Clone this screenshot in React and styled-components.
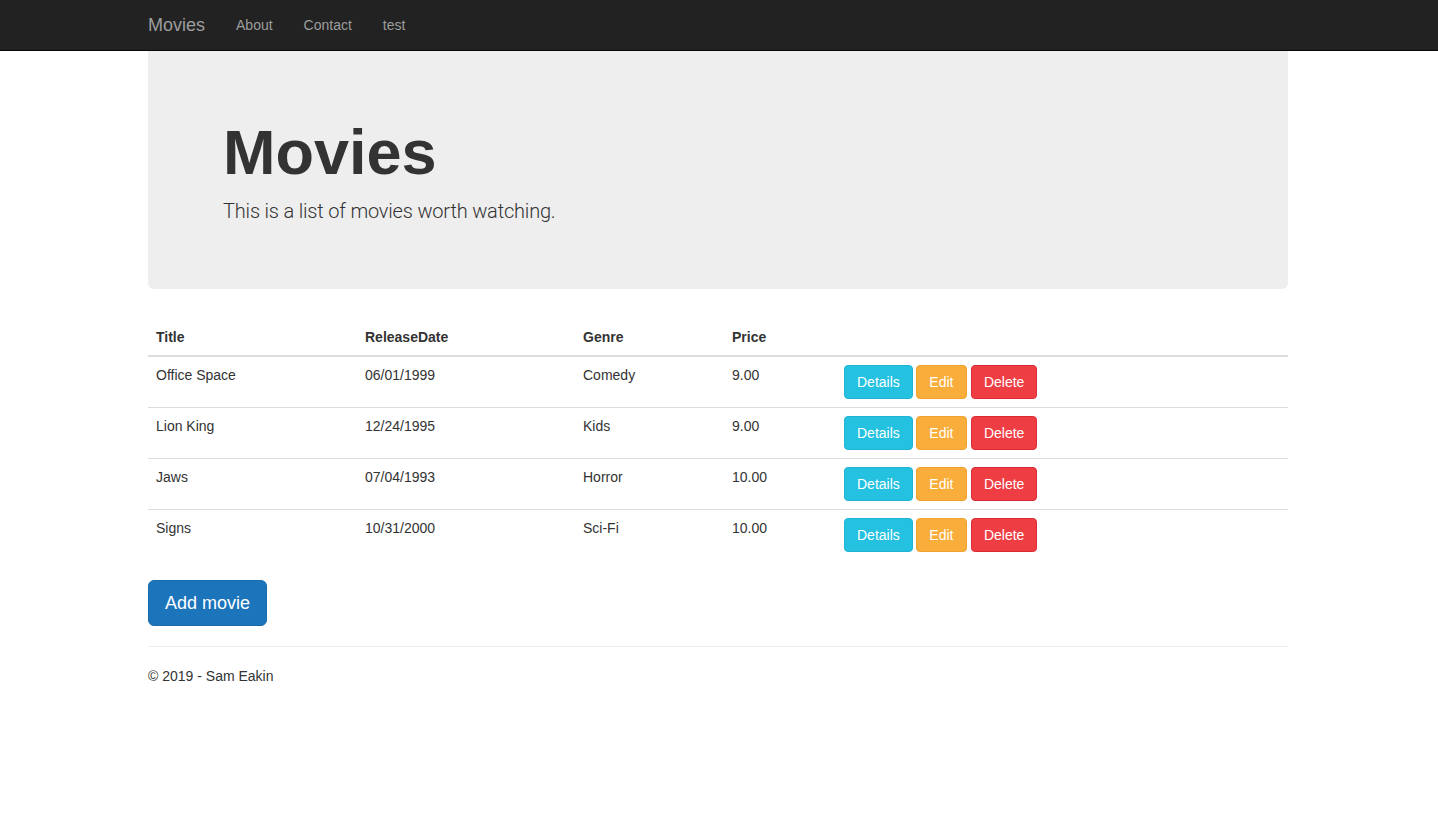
import React from 'react'
import styled, { createGlobalStyle } from 'styled-components'

const GlobalStyle = createGlobalStyle`
  html, body { margin: 0; padding: 0; }
  *, *::before, *::after { box-sizing: border-box; }
  body {
    font-family: "Liberation Sans", Arial, sans-serif;
    font-size: 14px;
    line-height: 1.42857;
    color: #333;
    background: #fff;
  }
`

const movies = [
  { title: 'Office Space', date: '06/01/1999', genre: 'Comedy', price: '9.00' },
  { title: 'Lion King', date: '12/24/1995', genre: 'Kids', price: '9.00' },
  { title: 'Jaws', date: '07/04/1993', genre: 'Horror', price: '10.00' },
  { title: 'Signs', date: '10/31/2000', genre: 'Sci-Fi', price: '10.00' },
]

function App() {
  return (
    <>
      <GlobalStyle />
      <Navbar>
        <NavInner>
          <Brand href="#">Movies</Brand>
          <NavLink href="#">About</NavLink>
          <NavLink href="#">Contact</NavLink>
          <NavLink href="#">test</NavLink>
        </NavInner>
      </Navbar>
      <Container>
        <Jumbotron>
          <Heading>Movies</Heading>
          <Lead>This is a list of movies worth watching.</Lead>
        </Jumbotron>
        <Table>
          <thead>
            <tr>
              <Th w="209px">Title</Th>
              <Th w="218px">ReleaseDate</Th>
              <Th w="149px">Genre</Th>
              <Th w="112px">Price</Th>
              <Th></Th>
            </tr>
          </thead>
          <tbody>
            {movies.map((m, i) => (
              <Row key={i}>
                <Td>{m.title}</Td>
                <Td>{m.date}</Td>
                <Td>{m.genre}</Td>
                <Td>{m.price}</Td>
                <Td>
                  <Actions>
                    <Btn kind="info">Details</Btn>
                    <Btn kind="warning" wide>Edit</Btn>
                    <Btn kind="danger">Delete</Btn>
                  </Actions>
                </Td>
              </Row>
            ))}
          </tbody>
        </Table>
        <AddButton>Add movie</AddButton>
        <Rule />
        <Footer>© 2019 - Sam Eakin</Footer>
      </Container>
    </>
  )
}

export default App

const Navbar = styled.div`
  height: 51px;
  background: #222;
  border-bottom: 1px solid #080808;
`

const NavInner = styled.div`
  width: 1140px;
  margin-left: calc(50% - 571px);
  display: flex;
  align-items: center;
  height: 50px;
`

const Brand = styled.a`
  font-size: 18px;
  line-height: 20px;
  color: #9d9d9d;
  text-decoration: none;
  padding: 15px 16px 15px 0;
`

const NavLink = styled.a`
  font-size: 14px;
  line-height: 20px;
  color: #9d9d9d;
  text-decoration: none;
  padding: 15px 16px 15px 15px;
`

const Container = styled.div`
  width: 1140px;
  margin-left: calc(50% - 571px);
`

const Jumbotron = styled.div`
  background: #eee;
  border-radius: 0 0 6px 6px;
  padding: 48px 75px;
  margin-bottom: 30px;
`

const Heading = styled.h1`
  font-size: 63px;
  line-height: 67px;
  font-weight: 700;
  margin: 20px 0 10px;
  color: #333;
`

const Lead = styled.p`
  font-family: Roboto, "Liberation Sans", sans-serif;
  font-size: 20px;
  font-weight: 300;
  letter-spacing: -0.18px;
  line-height: 30px;
  margin: 0 0 15px;
`

const Table = styled.table`
  width: 100%;
  table-layout: fixed;
  border-collapse: collapse;
  margin-bottom: 20px;
`

const Th = styled.th`
  width: ${p => p.w || 'auto'};
  text-align: left;
  font-weight: 700;
  padding: 8px;
  line-height: 20px;
  border-bottom: 2px solid #ddd;
`

const Row = styled.tr`
  & + & td { border-top: 1px solid #ddd; }
`

const Td = styled.td`
  padding: 8px;
  line-height: 20px;
  vertical-align: top;
`

const Actions = styled.div`
  display: flex;
  gap: 3px;
`

const colors = {
  info: ['#24c1e0', '#1fb4d2'],
  warning: ['#f9ad3b', '#f1a12c'],
  danger: ['#ee3e44', '#dc2c33'],
}

const Btn = styled.button`
  font-family: inherit;
  font-size: 14px;
  line-height: 20px;
  padding: ${p => (p.wide ? '6px 12.5px' : '6px 12px')};
  margin-right: ${p => (p.wide ? '1px' : '0')};
  border-radius: 4px;
  color: #fff;
  background: ${p => colors[p.kind][0]};
  border: 1px solid ${p => colors[p.kind][1]};
  cursor: pointer;
`

const AddButton = styled.button`
  font-family: inherit;
  font-size: 18px;
  line-height: 24px;
  padding: 10px 16px;
  border-radius: 6px;
  color: #fff;
  background: #1c75bb;
  border: 1px solid #1a6cad;
  cursor: pointer;
`

const Rule = styled.hr`
  margin: 20px 0;
  border: 0;
  border-top: 1px solid #eee;
`

const Footer = styled.p`
  margin: 1px 0 10px;
`
